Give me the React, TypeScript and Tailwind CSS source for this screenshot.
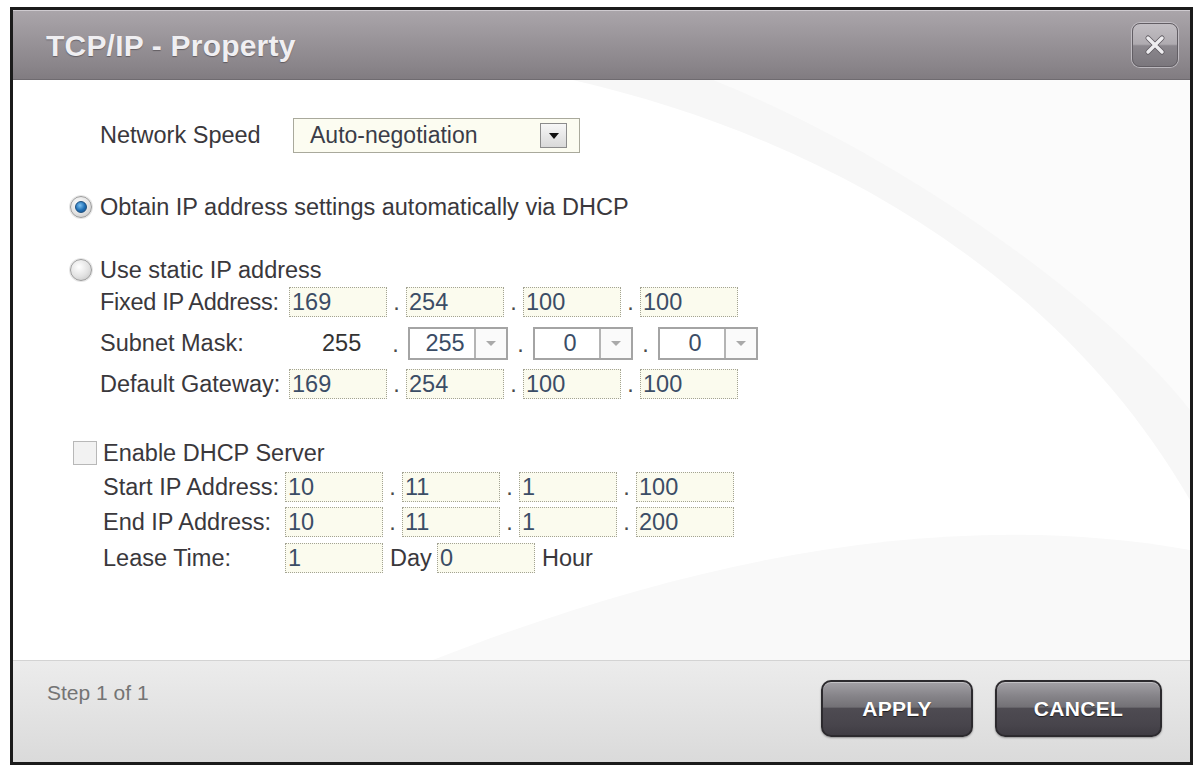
import React from "react";

const FONT = "font-['Liberation_Sans',Arial,sans-serif]";

function IpBox({ v }: { v: string }) {
  return (
    <div className="w-[98px] h-[30px] shrink-0 border border-dotted border-[#a3a393] bg-[#fbfbee] text-[#3b4d66] text-[23.5px] leading-[28px] pl-[2px]">
      {v}
    </div>
  );
}

function Dot({ w = "w-[19px]" }: { w?: string }) {
  return (
    <div className={`${w} shrink-0 text-center text-[23.5px] leading-[30px] text-[#4a4a4a]`}>.</div>
  );
}

function IpRow({ label, values, labelW, tight }: { label: string; values: string[]; labelW: string; tight?: boolean }) {
  return (
    <div className="flex items-center h-[30px]">
      <div className={`${labelW} shrink-0 text-[23.5px] leading-[30px] text-[#3a383c] whitespace-nowrap ${tight ? "tracking-[-0.3px]" : ""}`}>
        {label}
      </div>
      <IpBox v={values[0]} />
      <Dot />
      <IpBox v={values[1]} />
      <Dot />
      <IpBox v={values[2]} />
      <Dot />
      <IpBox v={values[3]} />
    </div>
  );
}

function MaskSelect({ v }: { v: string }) {
  return (
    <div className="w-[100px] h-[33px] shrink-0 flex border-2 border-[#a4a4a4] bg-white">
      <div className="flex-1 text-center text-[23.5px] leading-[29px] text-[#3b4d66] pl-[6px]">{v}</div>
      <div className="w-[32px] border-l-2 border-[#b4b4b4] flex items-center justify-center bg-[#fafafa]">
        <svg width="12" height="7" viewBox="0 0 12 7">
          <path d="M1 1 L11 1 L6 6 Z" fill="#a9a9a9" />
        </svg>
      </div>
    </div>
  );
}

function Radio({ checked }: { checked?: boolean }) {
  return (
    <div className="w-[22px] h-[22px] shrink-0 rounded-full border border-[#9c9c9c] bg-[radial-gradient(circle_at_40%_35%,#ffffff,#e2e2e2_55%,#bdbdbd)] flex items-center justify-center shadow-[0_0_0_1px_#e6e6e6]">
      {checked && (
        <div className="w-[12px] h-[12px] rounded-full bg-[radial-gradient(circle_at_40%_35%,#7cc0f0,#1f6fb5_55%,#174f8a)] border border-[#1d4f7e]" />
      )}
    </div>
  );
}

function Btn({ label, w }: { label: string; w: string }) {
  return (
    <div
      className={`${w} h-[57px] rounded-[10px] border-2 border-[#2c2a2e] bg-[linear-gradient(to_bottom,#a3a1a6_0%,#87858a_25%,#737176_47%,#4e4b52_50%,#48454c_80%,#3f3c43_100%)] shadow-[0_1px_2px_rgba(0,0,0,0.35),inset_0_1px_0_rgba(255,255,255,0.35)] flex items-center justify-center`}
    >
      <span className="text-white font-bold text-[21px] tracking-[0.3px] [text-shadow:0_1px_1px_rgba(0,0,0,0.6)]">{label}</span>
    </div>
  );
}

export default function App() {
  return (
    <div className={`${FONT} w-[1198px] h-[767px] bg-white pt-[7px] pl-[10px] overflow-hidden`}>
      <div className="w-[1183px] h-[758px] border-[3px] border-[#1b1b1b] flex flex-col bg-white">
        {/* Title bar */}
        <div className="h-[70px] shrink-0 flex items-center justify-between border-t border-[#cfcbd0] border-b border-b-[#6f6b70] bg-[linear-gradient(to_bottom,#aaa5aa_0%,#9a959a_40%,#8a858a_80%,#817c81_100%)]">
          <div className="pl-[33px] text-[30px] font-bold text-[#f0eff2] tracking-[0.2px] [text-shadow:0_1px_1px_rgba(60,55,60,0.55)]">
            TCP/IP - Property
          </div>
          <div className="mr-[12px] w-[46px] h-[44px] rounded-[8px] border border-[#625e64] shadow-[0_0_0_1px_rgba(210,206,212,0.7)] bg-[linear-gradient(to_bottom,#c2bec3_0%,#afabb0_48%,#8b878d_52%,#7b777d_100%)] flex items-center justify-center">
            <svg width="22" height="22" viewBox="0 0 22 22">
              <path d="M4 4 L18 18 M18 4 L4 18" stroke="#5b575d" strokeWidth="5" strokeLinecap="round" />
              <path d="M4 4 L18 18 M18 4 L4 18" stroke="#eeedf0" strokeWidth="3.5" strokeLinecap="round" />
            </svg>
          </div>
        </div>

        {/* Body */}
        <div className="relative h-[580px] shrink-0 bg-white overflow-hidden">
          <svg className="absolute inset-0 pointer-events-none" width="1177" height="580" viewBox="0 0 1177 580">
            <path d="M560 0 C 820 60, 1050 200, 1177 420 L1177 0 Z" fill="#f7f7f7" />
            <path d="M700 0 C 900 80, 1100 230, 1177 330 L1177 0 Z" fill="#fbfbfb" />
            <path d="M420 580 C 700 470, 950 430, 1177 470 L1177 580 Z" fill="#f9f9f9" />
          </svg>
          <div className="relative flex flex-col text-[#3a383c] text-[23.5px]">
            {/* Network speed */}
            <div className="mt-[38px] h-[35px] flex items-center pl-[87px]">
              <div className="w-[193px] shrink-0 leading-[35px]">Network Speed</div>
              <div className="w-[287px] h-[35px] border border-[#a9a99c] bg-[#fcfcf1] flex items-center justify-between pl-[16px] pr-[12px]">
                <span className="text-[23px] text-[#3a3c48]">Auto-negotiation</span>
                <div className="w-[27px] h-[25px] border border-[#8c8c8c] bg-[linear-gradient(to_bottom,#f7f7f7,#d9d9d9)] flex items-center justify-center">
                  <svg width="10" height="6" viewBox="0 0 10 6">
                    <path d="M0 0 L10 0 L5 6 Z" fill="#111" />
                  </svg>
                </div>
              </div>
            </div>

            {/* Radio 1 */}
            <div className="mt-[42px] h-[24px] flex items-center pl-[57px]">
              <Radio checked />
              <span className="ml-[8px] leading-[24px] whitespace-nowrap">Obtain IP address settings automatically via DHCP</span>
            </div>

            {/* Radio 2 */}
            <div className="mt-[39px] h-[24px] flex items-center pl-[57px]">
              <Radio />
              <span className="ml-[8px] leading-[24px] whitespace-nowrap">Use static IP address</span>
            </div>

            <div className="pl-[87px] flex flex-col">
              <div className="mt-[5px]">
                <IpRow label="Fixed IP Address:" values={["169", "254", "100", "100"]} labelW="w-[189px]" tight />
              </div>
              <div className="mt-[10px] h-[33px] flex items-center">
                <div className="w-[189px] shrink-0 leading-[33px] whitespace-nowrap">Subnet Mask:</div>
                <div className="w-[94px] shrink-0 pl-[33px] leading-[33px] text-[#333]">255</div>
                <Dot w="w-[25px]" />
                <MaskSelect v="255" />
                <Dot w="w-[25px]" />
                <MaskSelect v="0" />
                <Dot w="w-[25px]" />
                <MaskSelect v="0" />
              </div>
              <div className="mt-[9px]">
                <IpRow label="Default Gateway:" values={["169", "254", "100", "100"]} labelW="w-[189px]" />
              </div>
            </div>

            {/* Checkbox */}
            <div className="mt-[42px] h-[24px] flex items-center pl-[60px]">
              <div className="w-[24px] h-[24px] shrink-0 border border-[#b8b8b8] bg-[#f2f2f2]" />
              <span className="ml-[6px] leading-[24px] whitespace-nowrap">Enable DHCP Server</span>
            </div>

            <div className="pl-[90px] flex flex-col">
              <div className="mt-[7px]">
                <IpRow label="Start IP Address:" values={["10", "11", "1", "100"]} labelW="w-[182px]" />
              </div>
              <div className="mt-[5px]">
                <IpRow label="End IP Address:" values={["10", "11", "1", "200"]} labelW="w-[182px]" />
              </div>
              <div className="mt-[6px] h-[30px] flex items-center">
                <div className="w-[182px] shrink-0 leading-[30px]">Lease Time:</div>
                <IpBox v="1" />
                <div className="ml-[7px] w-[47px] shrink-0 leading-[30px]">Day</div>
                <IpBox v="0" />
                <div className="ml-[7px] leading-[30px]">Hour</div>
              </div>
            </div>
          </div>
        </div>

        {/* Footer */}
        <div className="flex-1 border-t border-[#d3d3d3] bg-[linear-gradient(to_bottom,#ececec,#dadada)] flex justify-between">
          <div className="pl-[34px] pt-[19px] text-[21px] leading-[26px] text-[#747474]">Step 1 of 1</div>
          <div className="pt-[19px] pr-[28px] flex gap-[22px]">
            <Btn label="APPLY" w="w-[152px]" />
            <Btn label="CANCEL" w="w-[167px]" />
          </div>
        </div>
      </div>
    </div>
  );
}
